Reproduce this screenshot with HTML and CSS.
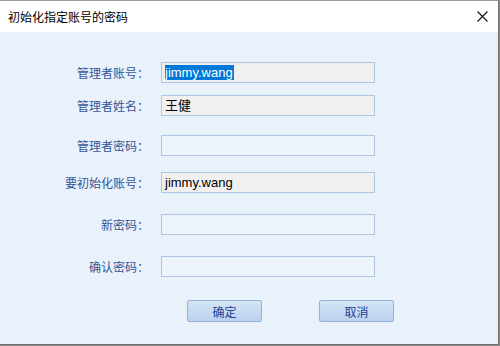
FILE: index.html
```html
<!DOCTYPE html>
<html lang="zh">
<head>
<meta charset="utf-8">
<title>初始化指定账号的密码</title>
<link rel="stylesheet" href="styles.css">
</head>
<body>
<div class="dialog">
  <div class="titlebar">
    <span class="title">初始化指定账号的密码</span>
    <svg class="close" width="11" height="11" viewBox="0 0 11 11"><path d="M0.5 0.5L10.5 10.5M10.5 0.5L0.5 10.5" stroke="#111" stroke-width="1.1" fill="none"/></svg>
  </div>
  <div class="content">
    <div class="row r1"><label class="lbl">管理者账号：</label><div class="field ro"><span class="sel">jimmy.wang</span></div></div>
    <div class="row r2"><label class="lbl">管理者姓名：</label><div class="field ro"><span class="val">王健</span></div></div>
    <div class="row r3"><label class="lbl">管理者密码：</label><div class="field"></div></div>
    <div class="row r4"><label class="lbl">要初始化账号：</label><div class="field ro"><span class="val">jimmy.wang</span></div></div>
    <div class="row r5"><label class="lbl">新密码：</label><div class="field"></div></div>
    <div class="row r6"><label class="lbl">确认密码：</label><div class="field"></div></div>
    <div class="buttons">
      <button class="btn">确定</button>
      <button class="btn">取消</button>
    </div>
  </div>
</div>
<div class="below"></div>
</body>
</html>
```
FILE: styles.css
```css
html, body {
  margin: 0;
  padding: 0;
  width: 500px;
  height: 346px;
  overflow: hidden;
  background: #8d8d8d;
  font-family: "Noto Sans CJK SC", "Liberation Sans", sans-serif;
}
.dialog {
  width: 498px;
  height: 343px;
  border-top: 1px solid #9c9c9c;
  border-right: 1px solid #6e6e6e;
  border-bottom: 1px solid #6e6e6e;
  background: #e9f1fa;
  display: flex;
  flex-direction: column;
}
.titlebar {
  height: 31px;
  background: #ffffff;
  display: flex;
  align-items: center;
  padding-left: 8px;
  padding-right: 10px;
  box-sizing: border-box;
}
.title {
  font-size: 12px;
  color: #000;
  flex: 1;
  line-height: 14px;
  position: relative;
  top: 0px;
}
.close {
  display: block;
}
.content {
  display: flex;
  flex-direction: column;
  padding-top: 30px;
}
.row {
  display: flex;
  align-items: center;
  height: 21px;
}
.r2 { margin-top: 12px; }
.r3 { margin-top: 19px; }
.r4 { margin-top: 16px; }
.r5 { margin-top: 21px; }
.r6 { margin-top: 21px; }
.lbl {
  width: 149px;
  text-align: right;
  font-size: 12px;
  color: #34559a;
  margin-right: 12px;
  line-height: 14px;
}
.field {
  width: 214px;
  height: 21px;
  box-sizing: border-box;
  border: 1px solid #aec5e3;
  background: #edf3fb;
  display: flex;
  align-items: center;
  padding-left: 3px;
  font-family: "Liberation Sans", "Noto Sans CJK SC", sans-serif;
  font-size: 13px;
}
.field.ro {
  background: #f0f0f0;
}
.sel {
  background: #0078d7;
  color: #fff;
  line-height: 15px;
  padding-right: 1px;
}
.val {
  color: #000;
  line-height: 15px;
}
.buttons {
  display: flex;
  margin-top: 23px;
  padding-left: 187px;
  gap: 57px;
}
.btn {
  width: 75px;
  height: 22px;
  border: 1px solid #93b3da;
  border-radius: 2px;
  background: linear-gradient(#d5e4f6, #c8dbf2 50%, #bad1ee);
  color: #1f3f92;
  font-size: 12px;
  font-family: "Noto Sans CJK SC", sans-serif;
  padding: 0;
  box-sizing: border-box;
}
```
